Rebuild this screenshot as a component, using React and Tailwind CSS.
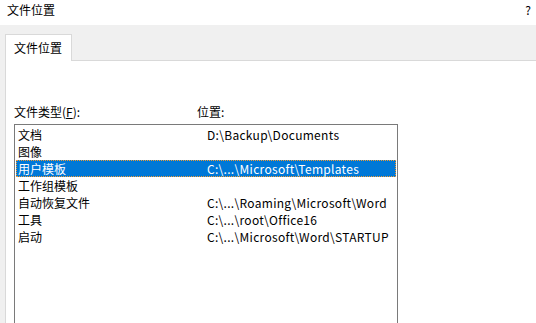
const rows = [
  { type: '文档', path: 'D:\\Backup\\Documents' },
  { type: '图像', path: '' },
  { type: '用户模板', path: 'C:\\...\\Microsoft\\Templates', selected: true },
  { type: '工作组模板', path: '' },
  { type: '自动恢复文件', path: 'C:\\...\\Roaming\\Microsoft\\Word' },
  { type: '工具', path: 'C:\\...\\root\\Office16' },
  { type: '启动', path: 'C:\\...\\Microsoft\\Word\\STARTUP' },
];

const App = () => {
  return (
    <div
      className="w-[536px] h-[323px] bg-white flex flex-col overflow-hidden text-[12px] text-black"
      style={{ fontFamily: '"Noto Sans CJK SC", "Noto Sans", sans-serif' }}
    >
      {/* title bar */}
      <div className="h-[25px] flex items-center justify-between pl-[7px] pr-[5px] shrink-0">
        <span className="leading-none -mt-[6px]">文件位置</span>
        <span className="leading-none -mt-[6px]">?</span>
      </div>

      {/* tab area */}
      <div className="flex-1 bg-[#f0f0f0] flex flex-col pl-[5px] pt-[9px]">
        <div className="flex">
          <div className="w-[67px] h-[27px] bg-white border border-b-0 border-[#d9d9d9] flex items-center pl-[8px] relative z-10 -mb-px">
            <span className="leading-none -mt-[1px]">文件位置</span>
          </div>
        </div>
        <div className="flex-1 bg-white border-l border-t border-[#d9d9d9] pl-[8px] flex flex-col">
          <div className="flex h-[63px] items-end pb-[6px]">
            <span className="w-[183px] leading-none">
              文件类型(<span className="underline">F</span>):
            </span>
            <span className="leading-none">位置:</span>
          </div>
          <div className="w-[384px] flex-1 border border-b-0 border-[#7a7a7a] pt-px px-px">
            {rows.map((r) => (
              <div
                key={r.type}
                className={
                  r.selected
                    ? 'h-[17px] flex items-center bg-[#0078d7] text-white border border-dotted border-[#f39c32]'
                    : 'h-[17px] flex items-center border border-transparent'
                }
              >
                <span className="w-[190px] pl-[1px] leading-none">{r.type}</span>
                <span className="leading-none tracking-[0.3px]">{r.path}</span>
              </div>
            ))}
          </div>
        </div>
      </div>
    </div>
  );
};

export default App;
